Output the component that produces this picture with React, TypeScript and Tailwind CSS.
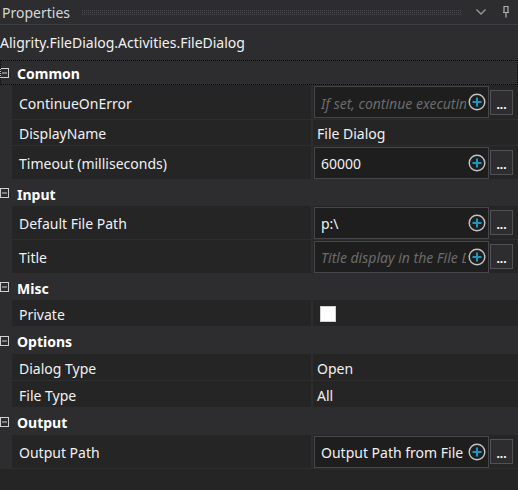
import React from 'react';

type Row =
  | { kind: 'cat'; label: string; focus?: boolean; h: string }
  | { kind: 'box'; label: string; value: string; placeholder?: boolean; h: string }
  | { kind: 'text'; label: string; value: string; h: string }
  | { kind: 'check'; label: string; h: string };

const rows: Row[] = [
  { kind: 'cat', label: 'Common', focus: true, h: 'h-[25px]' },
  { kind: 'box', label: 'ContinueOnError', value: 'If set, continue executing the remaining activities', placeholder: true, h: 'h-[35px]' },
  { kind: 'text', label: 'DisplayName', value: 'File Dialog', h: 'h-[26px]' },
  { kind: 'box', label: 'Timeout (milliseconds)', value: '60000', h: 'h-[34px]' },
  { kind: 'cat', label: 'Input', h: 'h-[26px]' },
  { kind: 'box', label: 'Default File Path', value: 'p:\\', h: 'h-[34px]' },
  { kind: 'box', label: 'Title', value: 'Title display in the File Dialog', placeholder: true, h: 'h-[34px]' },
  { kind: 'cat', label: 'Misc', h: 'h-[26px]' },
  { kind: 'check', label: 'Private', h: 'h-[27px]' },
  { kind: 'cat', label: 'Options', h: 'h-[27px]' },
  { kind: 'text', label: 'Dialog Type', value: 'Open', h: 'h-[27px]' },
  { kind: 'text', label: 'File Type', value: 'All', h: 'h-[27px]' },
  { kind: 'cat', label: 'Output', h: 'h-[27px]' },
  { kind: 'box', label: 'Output Path', value: 'Output Path from File Dialog', h: 'h-[34px]' },
];

const PlusCircle = () => (
  <svg width="18" height="18" viewBox="0 0 18 18" className="shrink-0">
    <circle cx="9" cy="9" r="7.8" fill="none" stroke="#c4c4c4" strokeWidth="1.4" />
    <path d="M9 4.5v9M4.5 9h9" stroke="#1c97c4" strokeWidth="2" />
  </svg>
);

const Collapse = () => (
  <svg width="10" height="10" viewBox="0 0 10 10" className="shrink-0">
    <rect x="0.5" y="0.5" width="8" height="9" fill="none" stroke="#d0d0d0" strokeWidth="1" />
    <path d="M2 5h5" stroke="#d0d0d0" strokeWidth="1" />
  </svg>
);

const Grip = () => (
  <svg className="h-[5px] flex-1 mr-[4px]" preserveAspectRatio="none">
    <defs>
      <pattern id="grip" width="2" height="2" patternUnits="userSpaceOnUse">
        <rect x="0" y="0" width="1" height="1" fill="#4a4a4f" />
      </pattern>
    </defs>
    <rect width="100%" height="100%" fill="url(#grip)" />
  </svg>
);

export default function App() {
  return (
    <div className="w-[518px] h-[490px] overflow-hidden bg-[#252526] text-[#f1f1f1] text-[14px] font-['Segoe_UI','Noto_Sans',sans-serif] flex flex-col">
      <div className="h-[25px] bg-[#2d2d30] flex items-center pl-[2px] pr-[8px] border-b border-[#3f3f46] shrink-0">
        <span className="text-[#d8d8d8] mr-[12px]">Properties</span>
        <Grip />
        <svg width="12" height="8" viewBox="0 0 12 8" className="ml-[9px] mr-[15px]">
          <path d="M1.5 1.5l4.5 4.5 4.5-4.5" fill="none" stroke="#9a9a9a" strokeWidth="1.3" />
        </svg>
        <svg width="8" height="12" viewBox="0 0 8 12">
          <path d="M1.5 0.5h5M2 0.5v6M6 0.5v6M1 6.5h6M4 6.5v5" fill="none" stroke="#b0b0b0" strokeWidth="1.2" />
        </svg>
      </div>
      <div className="h-[35px] bg-[#2d2d30] flex items-center shrink-0 whitespace-nowrap pb-[1px]">
        Aligrity.FileDialog.Activities.FileDialog
      </div>
      {rows.map((r, i) => {
        if (r.kind === 'cat') {
          return (
            <div
              key={i}
              className={`${r.h} shrink-0 bg-[#2d2d30] flex items-center gap-[7px] ${r.focus ? 'outline-1 outline-dotted outline-[#0a0a0a] -outline-offset-1' : ''}`}
            >
              <Collapse />
              <span className="font-bold text-white pt-[2px]">{r.label}</span>
            </div>
          );
        }
        return (
          <div key={i} className={`${r.h} shrink-0 flex bg-[#2d2d30] pl-[12px]`}>
            <div className="flex-1 flex border-b border-[#2d2d30] bg-[#252526]">
              <div className="w-[301px] pl-[7px] pt-[2px] flex items-center border-r-[2px] border-[#2d2d30] whitespace-nowrap">
                {r.label}
              </div>
              <div className="flex-1 flex items-center min-w-0">
                {r.kind === 'text' && <span className="pl-[4px] pt-[2px]">{r.value}</span>}
                {r.kind === 'check' && <div className="ml-[7px] mt-[2px] w-[16px] h-[16px] bg-white border border-[#d0d0d0]" />}
                {r.kind === 'box' && (
                  <div className="flex items-center w-full gap-[1px] pl-[1px]">
                    <div className="w-[175px] h-[32px] bg-[#1e1e1e] border border-[#46464b] flex items-center pl-[6px] pr-[2px] gap-[2px]">
                      <span
                        className={`flex-1 overflow-hidden whitespace-nowrap pt-[2px] ${r.placeholder ? 'italic text-[#6b6b6b]' : ''}`}
                      >
                        {r.value}
                      </span>
                      <PlusCircle />
                    </div>
                    <div className="w-[23px] h-[25px] bg-[#2d2d30] border border-[#505055] flex items-end justify-center pb-[3px] text-[12px] font-bold leading-none text-white">
                      ...
                    </div>
                  </div>
                )}
              </div>
            </div>
          </div>
        );
      })}
      <div className="flex-1" />
    </div>
  );
}
